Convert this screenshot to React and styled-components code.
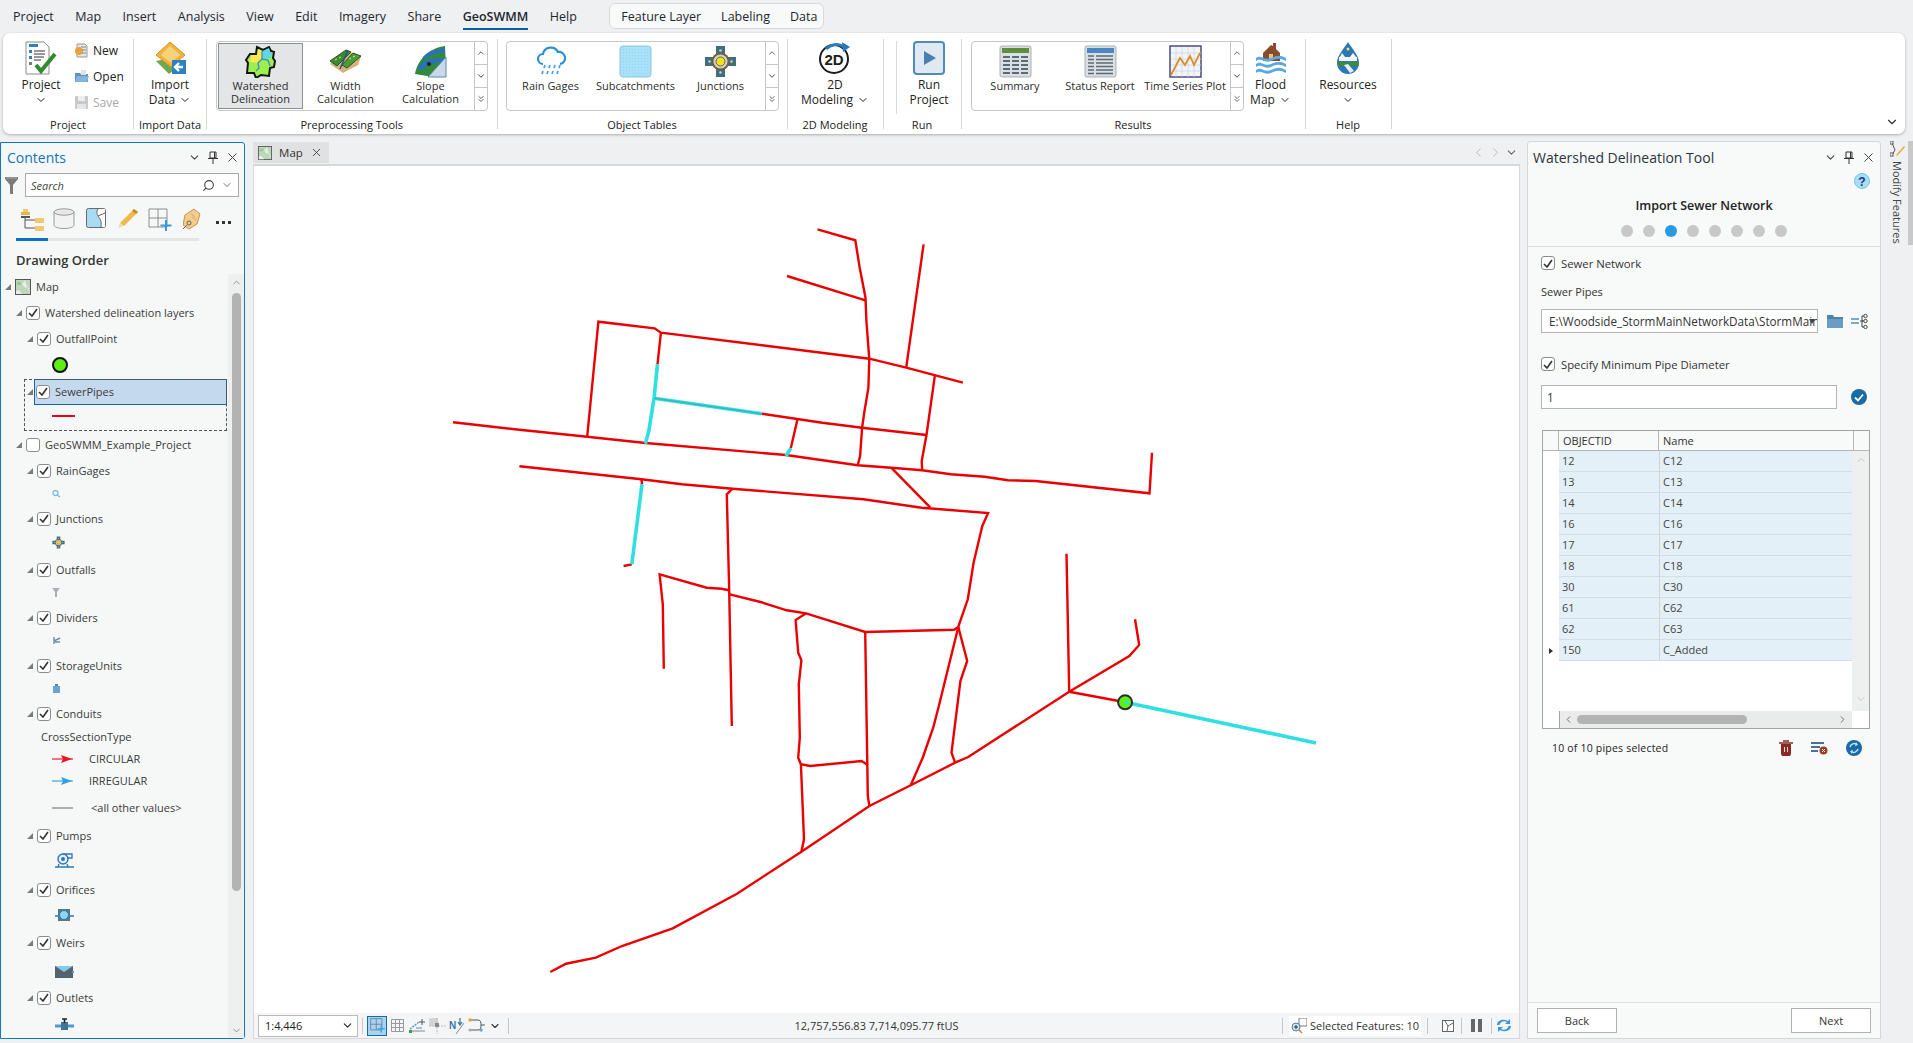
import React from 'react';
import styled, { createGlobalStyle } from 'styled-components';
import { ChevronDown, ChevronUp, ChevronLeft, ChevronRight, ChevronsDown, X, Search as SearchGlyph } from 'lucide-react';

const GlobalStyle = createGlobalStyle`
  html, body { margin: 0; padding: 0; background: #eef0f2; }
  body { font-family: "Open Sans", "Noto Sans", sans-serif; color: #2a2a2a; font-size: 11px; }
  * { box-sizing: border-box; }
`;

const Shell = styled.div`
  width: 1913px; height: 1043px; display: flex; flex-direction: column; overflow: hidden; background: #eef0f2;
`;

/* menu bar */
const MenuBar = styled.div`
  height: 33px; display: flex; align-items: flex-start; padding-left: 13px; gap: 21.5px;
`;
const MenuItem = styled.span`
  height: 27px; margin-top: 3px; line-height: 27px; font-size: 12.5px; color: #1e2730; white-space: nowrap;
  font-weight: ${p => (p.$active ? 600 : 400)};
  border-bottom: ${p => (p.$active ? '2px solid #0f5c9c' : 'none')};
`;
const ContextTabs = styled.div`
  margin-left: 11px; margin-top: 3px; height: 26px; width: 215px; display: flex; gap: 20px; padding-left: 11px;
  background: #f8f9f9; border: 1px solid #d9dcdf; border-radius: 6px; align-items: center;
  font-size: 12.5px; color: #1e2730;
`;

/* ribbon */
const Ribbon = styled.div`
  position: relative; margin-left: 3px; width: 1902px; height: 101px; display: flex; background: #fff;
  border-radius: 7px; box-shadow: 0 1px 3px rgba(0,0,0,.28);
`;
const Group = styled.div`
  width: ${p => p.$w}px; margin: 6px 0 5px; border-right: 1px solid #d4d6d8; display: flex; flex-direction: column;
`;
const GroupBody = styled.div`
  height: 78px; display: flex; padding-top: 2px; padding-left: ${p => p.$pad || 0}px;
  justify-content: ${p => (p.$center ? 'center' : 'flex-start')};
`;
const GroupLabel = styled.div`
  height: 12px; line-height: 16px; text-align: center; font-size: 11px; color: #222; white-space: nowrap;
`;
const LargeButton = styled.div`
  width: ${p => p.$w || 60}px; display: flex; flex-direction: column; align-items: center; flex: none;
  font-size: 12px; line-height: 15px; color: #222; text-align: center;
  svg.big { display: block; margin-bottom: 2px; }
`;
const LabelLine = styled.div`
  display: flex; align-items: center; justify-content: center; gap: 4px; height: 15px; white-space: nowrap;
`;
const SmallStack = styled.div`
  margin-top: -4px; margin-left: 3px; display: flex; flex-direction: column;
`;
const SmallButton = styled.div`
  height: 26px; display: flex; align-items: center; gap: 4px; font-size: 12px;
  color: ${p => (p.$off ? '#a8a8a8' : '#222')};
`;
const Gallery = styled.div`
  width: ${p => p.$w}px; height: 70px; display: flex; border: 1px solid #c4c6c8; border-radius: 4px; flex: none;
`;
const GalleryItems = styled.div`
  flex: 1; display: flex; padding: 1px;
`;
const GalleryItem = styled.div`
  width: 85px; height: 66px; display: flex; flex-direction: column; align-items: center; padding-top: 1px;
  font-size: 11px; line-height: 13px; color: #2c2c2c; text-align: center; white-space: nowrap;
  background: ${p => (p.$sel ? '#e3e5e7' : 'transparent')};
  border: ${p => (p.$sel ? '1px solid #8f8f8f' : '1px solid transparent')};
  svg { display: block; margin-bottom: 1px; flex: none; }
`;
const Spin = styled.div`
  width: 13px; border-left: 1px solid #c4c6c8; display: flex; flex-direction: column;
`;
const SpinCell = styled.div`
  flex: 1; display: flex; align-items: center; justify-content: center; color: #444;
  & + & { border-top: 1px solid #c4c6c8; }
`;
const Rule = styled.div`
  width: 1px; height: 73px; background: #d8dadc; flex: none;
`;
const CollapseRibbon = styled.div`
  position: absolute; right: 6px; bottom: 5px; color: #333; display: flex;
`;

/* panels */
const Body = styled.div`
  flex: 1; display: flex; margin-top: 7px; margin-bottom: 4px; min-height: 0;
`;
const ContentsPanel = styled.div`
  width: 245px; margin-top: 1px; display: flex; flex-direction: column; background: #f6f8f8;
  border: 1.5px solid #0e78c4; border-left-width: 1px; border-radius: 0 3px 3px 0; flex: none;
`;
const PanelHead = styled.div`
  height: ${p => p.$h}px; padding: 0 4px ${p => p.$pb || 0}px ${p => p.$pl}px; display: flex; align-items: center;
  justify-content: space-between; flex: none;
`;
const PanelTitle = styled.div`
  font-size: ${p => p.$size}px; color: ${p => p.$color}; white-space: nowrap;
`;
const PanelActions = styled.div`
  display: flex; align-items: center; gap: 7px; color: #444;
`;
const SearchRow = styled.div`
  display: flex; align-items: center; height: 24px; padding-left: 4px; gap: 7px; flex: none;
`;
const SearchBox = styled.div`
  width: 214px; height: 24px; background: #fff; border: 1px solid #a9a9a9; display: flex; align-items: center;
  padding: 0 5px; font-style: italic; font-size: 11px; color: #444; justify-content: space-between;
`;
const SearchTail = styled.div`
  display: flex; align-items: center; gap: 6px; color: #444;
`;
const ViewTabs = styled.div`
  margin: 9px 0 0 15px; width: 183px; height: 35px; display: flex; border-bottom: 3px solid #e3e5e6; position: relative; flex: none;
  &::after { content: ''; position: absolute; left: 0; bottom: -3px; width: 32px; height: 3px; background: #0f6fc0; }
`;
const ViewTab = styled.div`
  width: 32px; display: flex; justify-content: center; padding-top: 2px; flex: none;
`;
const SectionTitle = styled.div`
  margin: 8px 0 0 15px; height: 22px; line-height: 22px; font-size: 13px; font-weight: 600; color: #333; flex: none;
`;
const TreeWrap = styled.div`
  flex: 1; display: flex; min-height: 0; margin-top: 3px;
`;
const Tree = styled.div`
  flex: 1; padding-top: 2.7px; overflow: hidden;
`;
const TreeRow = styled.div`
  position: relative; height: ${p => p.$h}px; display: flex; align-items: flex-end;
  padding-left: ${p => p.$indent}px; flex: none;
`;
const RowInner = styled.div`
  height: 20px; display: flex; align-items: center; gap: ${p => p.$gap ?? 5}px; white-space: nowrap;
  font-size: 11px; color: #3a3a3a; flex: ${p => (p.$sel ? 1 : 'none')};
`;
const SelectedName = styled.div`
  flex: 1; height: 26px; display: flex; align-items: center; gap: 5px; padding-left: 1px; margin: 0 1px 0 -3px;
  background: #c5d9ee; border: 1px solid #0f68aa;
`;
const FocusRing = styled.div`
  position: absolute; left: 23px; right: 1px; top: 4px; height: 52px; border: 1px dashed #555; pointer-events: none;
`;
const Arrow = styled.span`
  width: 0; height: 0; border-style: solid; border-width: 0 0 6px 6px; border-color: transparent transparent #7a7a7a transparent;
  display: block; flex: none; margin-right: -1px;
`;
const Box = styled.span`
  width: 14px; height: 14px; display: flex; align-items: center; justify-content: center; background: #fff;
  border: 1px solid #8c8c8c; border-radius: 3px; flex: none;
`;
const VScroll = styled.div`
  width: 16px; background: #eef0f0; position: relative; flex: none;
`;
const ScrollThumb = styled.div`
  position: absolute; left: 4px; width: 9px; top: 19px; height: 598px; background: #b3b3b3; border-radius: 5px;
`;
const ScrollArrow = styled.div`
  position: absolute; left: 3px; color: #8a8a8a; display: flex;
  ${p => (p.$end ? 'bottom: 2px;' : 'top: 3px;')}
`;
const Legend = styled.span`
  margin-left: ${p => p.$ml || 0}px;
`;

/* map */
const Center = styled.div`
  width: 1267px; margin-left: 8px; margin-right: 7px; display: flex; flex-direction: column; flex: none;
`;
const TabStrip = styled.div`
  height: 22px; display: flex; justify-content: space-between; align-items: flex-start; margin-top: 1px; flex: none;
`;
const MapTab = styled.div`
  width: 76px; height: 21px; background: #dfe1e3; display: flex; align-items: center; padding: 0 6px 0 5px; gap: 5px;
  font-size: 11.5px; color: #333; justify-content: space-between;
`;
const TabNav = styled.div`
  display: flex; gap: 2px; color: #999; padding: 3px 2px 0 0; align-items: center;
`;
const MapFrame = styled.div`
  flex: 1; background: #fff; border-top: 2px solid #d6d8da; border-right: 1px solid #d6d8da; border-left: 1px solid #d6d8da; min-height: 0;
  svg { display: block; }
`;
const StatusBar = styled.div`
  height: 26px; background: #f3f5f6; display: flex; align-items: center; padding: 0 4px; border: 1px solid #d6d8da; border-top: none;
  font-size: 11px; color: #333; flex: none;
`;
const ScaleCombo = styled.div`
  width: 100px; height: 22px; background: #fff; border: 1px solid #b9b9b9; display: flex; align-items: center;
  justify-content: space-between; padding: 0 3px 0 6px; font-size: 11px; color: #222;
`;
const StatusSep = styled.div`
  width: 1px; height: 16px; background: #c6c8ca; margin: 0 ${p => p.$m ?? 0}px; flex: none;
`;
const ToolIcon = styled.div`
  width: ${p => p.$w || 18}px; height: 20px; display: flex; align-items: center; justify-content: center; flex: none;
  background: ${p => (p.$on ? '#a8d2ee' : 'transparent')};
  border: ${p => (p.$on ? '1px solid #0f6cb0' : 'none')};
`;
const Coords = styled.div`
  flex: 1; text-align: center; white-space: nowrap; font-size: 11px; padding-right: 36px;
`;
const SelectedCount = styled.div`
  display: flex; align-items: center; gap: 3px; white-space: nowrap; background: #fff; height: 20px; padding: 0 2px;
`;

/* right pane */
const ToolPanel = styled.div`
  width: 354px; display: flex; flex-direction: column; background: #f8f9f9; border: 1px solid #d4d6d8; border-radius: 3px 3px 0 0; flex: none;
`;
const HelpRow = styled.div`
  display: flex; justify-content: flex-end; padding-right: 10px; height: 18px; flex: none;
`;
const StepTitle = styled.div`
  margin-top: 5px; text-align: center; font-size: 12.5px; font-weight: 600; color: #222; height: 20px; line-height: 20px; flex: none;
`;
const Dots = styled.div`
  display: flex; justify-content: center; gap: 10px; margin-top: 9px; flex: none;
`;
const Dot = styled.span`
  width: 12px; height: 12px; border-radius: 50%; background: ${p => (p.$on ? '#2b9ae5' : '#c8c8c8')};
`;
const ToolBody = styled.div`
  flex: 1; margin-top: 9px; border-top: 1px solid #dcdee0; padding: 0 10px 0 13px; display: flex; flex-direction: column; min-height: 0;
`;
const CheckRow = styled.div`
  display: flex; align-items: center; gap: 6px; height: 20px; margin-top: ${p => p.$mt}px; font-size: 11.3px; color: #333;
`;
const FieldLabel = styled.div`
  margin-top: 9px; height: 20px; line-height: 20px; font-size: 11px; color: #333;
`;
const FieldRow = styled.div`
  display: flex; align-items: center; margin-top: ${p => p.$mt}px; height: 24px;
`;
const Combo = styled.div`
  width: ${p => p.$w}px; height: 24px; background: #fff; border: 1px solid #b5b5b5; display: flex; align-items: center;
  padding-left: ${p => p.$pl}px; font-size: 11.7px; color: #333; white-space: nowrap; overflow: hidden; position: relative; flex: none;
`;
const ComboMark = styled.span`
  position: absolute; right: 2px; top: 9px; width: 0; height: 0; border-style: solid; border-width: 5px 3.5px 0; border-color: #444 transparent transparent;
`;
const FieldTool = styled.div`
  margin-left: ${p => p.$ml}px; display: flex; flex: none;
`;
const Table = styled.div`
  margin: 21px 0 0 1px; width: 328px; height: 299px; border: 1px solid #a3a3a3; display: flex; flex-direction: column; background: #fff; flex: none;
`;
const HeadRow = styled.div`
  height: 20px; display: grid; grid-template-columns: 16px 100px 195px 1fr; border-bottom: 1px solid #b5b5b5; background: #f8f9f9; flex: none;
`;
const HeadCell = styled.div`
  border-right: 1px solid #b5b5b5; padding-left: 4px; font-size: 11px; line-height: 19px; color: #333;
  &:last-child { border-right: none; }
`;
const TableBody = styled.div`
  flex: 1; display: flex; min-height: 0;
`;
const RowsCol = styled.div`
  flex: 1;
`;
const DataRow = styled.div`
  height: 21px; display: grid; grid-template-columns: 16px 100px 1fr;
`;
const Gutter = styled.div`
  display: flex; align-items: center; justify-content: center; background: #fff;
`;
const Cell = styled.div`
  background: #e4f0f8; border-bottom: 1px solid #d3dde4; padding-left: 3px; line-height: 20px; font-size: 11px; color: #444;
  & + & { border-left: 1px solid #d0d3d5; }
`;
const RowMark = styled.span`
  width: 0; height: 0; border-style: solid; border-width: 3.5px 0 3.5px 4px; border-color: transparent transparent transparent #333;
`;
const TableVScroll = styled.div`
  width: 17px; background: #eeefef; display: flex; flex-direction: column; justify-content: space-between; align-items: center; padding: 3px 0 6px; color: #c4c4c4;
`;
const TableHScroll = styled.div`
  height: 17px; display: grid; grid-template-columns: 16px 1fr 17px; flex: none;
`;
const HTrack = styled.div`
  background: #eaebeb; display: flex; align-items: center; justify-content: space-between; color: #666; padding: 0 4px 0 3px; border-left: 1px solid #a3a3a3; position: relative;
`;
const HThumb = styled.div`
  position: absolute; left: 17px; width: 170px; height: 9px; top: 4px; background: #b3b3b3; border-radius: 5px;
`;
const CountRow = styled.div`
  display: flex; align-items: center; height: 24px; margin-top: 7px; padding-left: 11px; font-size: 10.5px; letter-spacing: .2px; color: #222;
`;
const CountTools = styled.div`
  margin-left: auto; display: flex; gap: 18px; padding-right: 8px; align-items: center;
`;
const ToolFoot = styled.div`
  height: 36px; border-top: 1px solid #dcdee0; padding: 5px 9px 0; display: flex; justify-content: space-between; flex: none;
`;
const FootButton = styled.div`
  width: 80px; height: 25px; background: #fff; border: 1px solid #b0b0b0; display: flex; align-items: center; justify-content: center; font-size: 11px; color: #333;
`;
const Strip = styled.div`
  flex: 1; display: flex; height: 104px; justify-content: space-between; padding-left: 9px;
`;
const StripTab = styled.div`
  display: flex; flex-direction: column; align-items: center; gap: 4px;
`;
const VerticalText = styled.div`
  writing-mode: vertical-rl; font-size: 11px; color: #444; white-space: nowrap;
`;
const StripBar = styled.div`
  width: 5px; background: #c9c9c9;
`;

/* drawings */
const ProjectIcon = () => (
  <svg className="big" width="32" height="34" viewBox="0 0 32 34">
    <path d="M1 1h18l5 5v27H1z" fill="#fff" stroke="#8b8b8b" />
    <rect x="4" y="3" width="9" height="3" fill="#2f7fc1" />
    <rect x="4" y="9" width="3" height="3" fill="#2f7fc1" /><rect x="4" y="15" width="3" height="3" fill="#2f7fc1" /><rect x="4" y="21" width="3" height="3" fill="#7a7a7a" />
    <path d="M9 10h11M9 13h11M9 16h10M9 19h7" stroke="#777" strokeWidth="1.4" />
    <path d="M11 24l5 6L30 13" fill="none" stroke="#2e8b2e" strokeWidth="4" />
  </svg>
);
const NewIcon = () => (
  <svg width="15" height="15" viewBox="0 0 15 15">
    <path d="M3 1h8l2 2v11H3z" fill="#e4e6e8" stroke="#9a9a9a" />
    <circle cx="5" cy="8" r="4" fill="#e8a33a" /><path d="M7 4h5M8 7h4M8 10h4" stroke="#888" />
  </svg>
);
const OpenIcon = () => (
  <svg width="15" height="15" viewBox="0 0 15 15">
    <path d="M1 4h5l1 1h7v8H1z" fill="#5a93c4" /><path d="M3 7h12l-2 6H1z" fill="#86b3d9" />
    <rect x="7" y="1" width="5" height="5" fill="#dfe3e6" />
  </svg>
);
const SaveIcon = () => (
  <svg width="15" height="15" viewBox="0 0 15 15">
    <rect x="1" y="1" width="13" height="13" rx="1" fill="#c7c9cb" /><rect x="4" y="1" width="7" height="5" fill="#eceeef" /><rect x="3" y="9" width="9" height="5" fill="#e3e5e6" />
  </svg>
);
const ImportIcon = () => (
  <svg className="big" width="33" height="34" viewBox="0 0 33 34">
    <path d="M2 20l13 13 8-6V16z" fill="#6ea84f" />
    <path d="M16 1l15 13-14 12L2 14z" fill="#f0b43c" stroke="#d98e1f" />
    <path d="M16 5l10 9-9 8-10-8z" fill="#f6d27a" />
    <rect x="18" y="19" width="14" height="14" fill="#2f7fc1" />
    <path d="M29 26h-8M25 22l-4 4 4 4" fill="none" stroke="#fff" strokeWidth="2.4" />
  </svg>
);
const WatershedIcon = () => (
  <svg width="33" height="33" viewBox="0 0 33 33">
    <path d="M6 9h6l1-7 6 3 6-3 2 4 3 1-1 6 2 3-1 6-4 1-1 8-8-1-5 3-2-5-7 0 1-10-2-3z" fill="#9df04c" stroke="#151515" strokeWidth="2" />
    <path d="M7 10h6l1-6 4 2v8l-5 4-7-1z" fill="#ffe94a" />
    <path d="M19 6l6-3 1 4 2 1-1 5-8 1z" fill="#5fd6f0" />
    <path d="M18 6v8l-4 4 1 5-3 3M18 14l6 1 2 6" fill="none" stroke="#3f8fd0" strokeWidth="1.4" />
  </svg>
);
const WidthIcon = () => (
  <svg width="33" height="33" viewBox="0 0 33 33">
    <path d="M1 19l18-13 13 6-3 8-15 8z" fill="#d6b27a" />
    <path d="M1 16L17 5l5 2-14 14z" fill="#3f8a2e" stroke="#24591a" />
    <path d="M13 20L24 8l8 3-14 12z" fill="#4c9a38" stroke="#24591a" />
    <path d="M19 5l-8 19" stroke="#1d4fa0" strokeWidth="1.4" />
    <path d="M6 15l2-1M10 13l2-1M20 14l2-1M24 12l2-1" stroke="#cfe8b0" />
  </svg>
);
const SlopeIcon = () => (
  <svg width="33" height="33" viewBox="0 0 33 33">
    <path d="M1 29C3 16 14 3 31 1l1 22-13 9z" fill="#2f8b3a" />
    <path d="M9 12C15 6 23 3 31 4l0 4C22 7 15 11 9 15z" fill="#2a6fc0" />
    <path d="M4 22c7-8 15-10 27-8v4C21 16 13 20 6 26z" fill="#2a6fc0" />
    <path d="M14 32l18-20v20z" fill="#c9d9ea" stroke="#5f86b0" />
    <circle cx="15" cy="19" r="2" fill="#1d1d1d" />
  </svg>
);
const RainIcon = () => (
  <svg width="33" height="33" viewBox="0 0 33 33">
    <path d="M9 19a5 5 0 0 1 0-10 8 8 0 0 1 15-2 6 6 0 0 1 2 12" fill="#fff" stroke="#2f8fd4" strokeWidth="2.2" />
    <path d="M11 20l-1 3M16 20l-1 3M21 20l-1 3M26 20l-1 3M9 26l-1 3M14 26l-1 3M19 26l-1 3M24 26l-1 3" stroke="#3fa0dd" strokeWidth="1.7" />
  </svg>
);
const SubcatchIcon = () => (
  <svg width="33" height="33" viewBox="0 0 33 33">
    <defs><pattern id="subdots" width="3" height="3" patternUnits="userSpaceOnUse"><rect width="3" height="3" fill="#a9e2f8" /><circle cx="1.5" cy="1.5" r=".6" fill="#8fd2f0" /></pattern></defs>
    <rect x="1" y="1" width="31" height="31" rx="3" fill="url(#subdots)" stroke="#8ec7e6" />
  </svg>
);
const JunctionIcon = ({ size = 33 }) => (
  <svg width={size} height={size} viewBox="0 0 33 33">
    <path d="M12 1h9v8l3 3h8v9h-8l-3 3v8h-9v-8l-3-3H1v-9h8l3-3z" fill="#3f6f78" />
    <circle cx="16.5" cy="16.5" r="9" fill="#7c5a3a" /><circle cx="16.5" cy="16.5" r="7" fill="#c9d6d8" /><circle cx="16.5" cy="16.5" r="4.5" fill="#f4e01c" stroke="#222" strokeWidth=".6" />
    <circle cx="16.5" cy="5.5" r="1.3" fill="#bcd" /><circle cx="16.5" cy="27.5" r="1.3" fill="#bcd" /><circle cx="5.5" cy="16.5" r="1.3" fill="#bcd" /><circle cx="27.5" cy="16.5" r="1.3" fill="#bcd" />
  </svg>
);
const ModelIcon = () => (
  <svg className="big" width="34" height="34" viewBox="0 0 34 34">
    <circle cx="16" cy="18" r="14" fill="#fff" stroke="#1c1c1c" strokeWidth="2" />
    <path d="M8 8A14 14 0 0 1 26 6" fill="none" stroke="#2a7ab8" strokeWidth="3" />
    <path d="M24 1l8 5-7 5z" fill="#2a7ab8" />
    <text x="16" y="24" textAnchor="middle" fontFamily="Liberation Sans, sans-serif" fontSize="15" fontWeight="700" fill="#1c1c1c">2D</text>
  </svg>
);
const RunIcon = () => (
  <svg className="big" width="32" height="34" viewBox="0 0 32 34">
    <rect x="1" y="1" width="30" height="32" rx="3" fill="#dfe9f2" stroke="#4f8ab8" strokeWidth="2" />
    <path d="M11 10l12 7-12 7z" fill="#4a7fb0" />
  </svg>
);
const SummaryIcon = () => (
  <svg width="33" height="33" viewBox="0 0 33 33">
    <rect x="1" y="1" width="31" height="31" rx="2" fill="#d9dfe3" stroke="#a7b1b8" />
    <rect x="3" y="3" width="27" height="5" fill="#5f8f3e" />
    <path d="M4 12h7M13 12h7M22 12h7M4 16h7M13 16h7M22 16h7M4 20h7M13 20h7M22 20h7M4 24h7M13 24h7M22 24h7M4 28h7M13 28h7M22 28h7" stroke="#5c6a74" strokeWidth="2" />
  </svg>
);
const StatusIcon = () => (
  <svg width="33" height="33" viewBox="0 0 33 33">
    <rect x="1" y="1" width="31" height="31" rx="2" fill="#d9dfe3" stroke="#a7b1b8" />
    <rect x="3" y="3" width="27" height="5" fill="#4d86c4" />
    <path d="M4 11h6M12 11h17M4 14.5h6M12 14.5h17M4 18h6M12 18h17M4 21.5h6M12 21.5h17M4 25h6M12 25h17M4 28.5h6M12 28.5h17" stroke="#5c6a74" strokeWidth="1.6" />
  </svg>
);
const SeriesIcon = () => (
  <svg width="33" height="33" viewBox="0 0 33 33">
    <rect x="1" y="1" width="31" height="31" fill="#f2f5f8" stroke="#3e3f7a" strokeWidth="1.4" />
    <path d="M7 2v30M13 2v30M19 2v30M25 2v30M2 8h30M2 14h30M2 20h30M2 26h30" stroke="#cdd6de" strokeWidth=".8" />
    <path d="M2 30L11 13l5 7 5-9 4 9 6-12" fill="none" stroke="#d98e2b" strokeWidth="1.8" />
  </svg>
);
const FloodIcon = () => (
  <svg className="big" width="32" height="34" viewBox="0 0 32 34">
    <path d="M8 12l8-8 2 1V2h3v6l4 4v8H8z" fill="#8a4a30" />
    <rect x="14" y="13" width="4" height="5" fill="#f0c26a" />
    <path d="M1 17c5-4 8 3 15 0s9-3 15 0v3c-6-3-9-3-15 0s-10-4-15 0z" fill="#5aa8e0" />
    <path d="M1 23c5-4 8 3 15 0s9-3 15 0v3c-6-3-9-3-15 0s-10-4-15 0z" fill="#5aa8e0" />
    <path d="M1 29c5-4 8 3 15 0s9-3 15 0v3c-6-3-9-3-15 0s-10-4-15 0z" fill="#5aa8e0" />
  </svg>
);
const DropIcon = () => (
  <svg className="big" width="26" height="34" viewBox="0 0 26 34">
    <path d="M13 1C9 8 2 14 2 22a11 11 0 0 0 22 0C24 14 17 8 13 1z" fill="#2a78b8" />
    <path d="M4 16h18v4H4z" fill="#f2f5f2" /><path d="M7 12l3 4H5zM18 12l3 4h-6z" fill="#fff" />
    <path d="M2.5 22c5-3 8 1 11 0s7-3 10 0v3H3z" fill="#3f8a3a" />
    <path d="M9 24l6 8 4-2-6-7z" fill="#e8eef2" /><circle cx="13" cy="8" r="1.5" fill="#f5e05a" />
  </svg>
);

const Tick = () => (
  <svg width="10" height="9" viewBox="0 0 10 9"><path d="M1 5l3 3 5-7" fill="none" stroke="#333" strokeWidth="1.6" /></svg>
);
const PinIcon = () => (
  <svg width="10" height="13" viewBox="0 0 10 13"><path d="M2 1h6v6H2zM0 7.5h10M5 8v5M6.5 1v6" fill="none" stroke="#333" /></svg>
);
const FunnelIcon = () => (
  <svg width="13" height="17" viewBox="0 0 13 17"><path d="M0 0h13v2L8 8v9H5V8L0 2z" fill="#7b7b7b" /><path d="M1 1h11" stroke="#aaa" /></svg>
);
const OrderTab = () => (
  <svg width="23" height="24" viewBox="0 0 23 24">
    <rect x="0" y="4" width="9" height="3" fill="#e9b44c" /><rect x="2" y="1" width="5" height="3" fill="#f1c86e" />
    <rect x="14" y="10" width="9" height="5" fill="#f1c86e" /><rect x="14" y="18" width="9" height="5" fill="#f1c86e" />
    <path d="M4 8v12h10M4 12h10" fill="none" stroke="#555" /><rect x="0" y="8" width="9" height="2" fill="#555" />
  </svg>
);
const CylinderTab = () => (
  <svg width="22" height="21" viewBox="0 0 22 21">
    <path d="M1 4v13c0 2 4 3.5 10 3.5s10-1.5 10-3.5V4" fill="#f2f2f2" stroke="#9a9a9a" />
    <ellipse cx="11" cy="4" rx="10" ry="3.2" fill="#e8e8e8" stroke="#9a9a9a" />
  </svg>
);
const MapTabIcon = ({ size = 20 }) => (
  <svg width={size} height={size} viewBox="0 0 20 20">
    <rect x=".5" y=".5" width="19" height="19" rx="2" fill="#a8dcf2" stroke="#6a6a6a" />
    <path d="M12 1c-2 3-1 5 0 7s4 3 3 11h4V1z" fill="#fff" /><path d="M12 1c-2 3-1 5 0 7s4 3 3 11" fill="none" stroke="#666" /><path d="M12 8l7-3" stroke="#666" />
  </svg>
);
const PencilTab = () => (
  <svg width="21" height="21" viewBox="0 0 21 21">
    <path d="M16 1l4 3L6 18l-4-3z" fill="#f0b94a" /><path d="M2 15l-2 5 5-2z" fill="#e8d8b0" /><path d="M16 1l4 3-2 2-4-3z" fill="#c98a2a" />
  </svg>
);
const GridPlus = ({ s = 24, c = '#8c8c8c' }) => (
  <svg width={s} height={s} viewBox="0 0 24 24">
    <path d="M1 1h18v18H1zM1 10h18M10 1v18" fill="none" stroke={c} />
    <path d="M18 12v11M12.5 17.5h11" stroke="#3a9ad9" strokeWidth="2" />
  </svg>
);
const TagTab = () => (
  <svg width="18" height="22" viewBox="0 0 18 22">
    <path d="M11 1l6 5-3 10-8 5-6-4 2-10z" fill="#f3cb8c" stroke="#c9934a" />
    <circle cx="6" cy="15" r="2" fill="none" stroke="#666" /><path d="M0 21l4-4" stroke="#666" />
    <path d="M9 9l4 3M8 6l4 3" stroke="#d9a860" />
  </svg>
);
const DotsTab = () => (
  <svg width="16" height="3" viewBox="0 0 16 3" style={{ marginTop: 13 }}><path d="M0 0h3v3H0zM6 0h3v3H6zM12 0h3v3h-3z" fill="#333" /></svg>
);
const MapGlyph = ({ s = 16 }) => (
  <svg width={s} height={s} viewBox="0 0 16 16">
    <rect x=".5" y=".5" width="15" height="15" fill="#bcd8b8" stroke="#555" />
    <path d="M10 1l-3 4 2 3 5 1 1 6H7L4 11l-3 1V15h14" fill="#e8ece6" /><path d="M2 3h4v3H2z" fill="#9dc49a" />
  </svg>
);
const Line = ({ c, arrow }) => (
  <svg width="22" height="8" viewBox="0 0 22 8" style={{ display: 'block' }}>
    <path d="M0 4h21" stroke={c} strokeWidth="1.6" opacity={arrow ? 0.7 : 1} />
    {arrow && <path d="M9 0l11 4-11 4 2-4z" fill={c} />}
  </svg>
);
const RainSym = () => (<svg width="9" height="8" viewBox="0 0 9 8"><circle cx="3.5" cy="3" r="2.5" fill="none" stroke="#74bde8" strokeWidth="1.3" /><path d="M5 5l3 2" stroke="#74bde8" strokeWidth="1.3" /></svg>);
const OutfallSym = () => (<svg width="8" height="9" viewBox="0 0 8 9"><path d="M0 0h8L5 4v5H3V4z" fill="#aab2b8" /></svg>);
const DividerSym = () => (<svg width="9" height="9" viewBox="0 0 9 9"><path d="M2 1v7M2 5l6-3M3 6l5 0" stroke="#6d8ea6" strokeWidth="1.4" fill="none" /></svg>);
const StorageSym = () => (<svg width="7" height="9" viewBox="0 0 7 9"><rect x="0" y="2" width="7" height="7" fill="#6aa5cf" /><rect x="2" y="0" width="3" height="2" fill="#4f86ad" /></svg>);
const PumpSym = () => (
  <svg width="19" height="16" viewBox="0 0 19 16">
    <circle cx="8" cy="6" r="5" fill="#e8f2fa" stroke="#2a78b8" strokeWidth="1.4" /><circle cx="8" cy="6" r="2" fill="#2a78b8" />
    <path d="M8 1h9v4h-5M0 14h19M4 11l-1 3M12 11l1 3" fill="none" stroke="#2a78b8" strokeWidth="1.3" />
  </svg>
);
const OrificeSym = () => (
  <svg width="19" height="13" viewBox="0 0 19 13">
    <path d="M0 7h19" stroke="#4f9ad0" strokeWidth="2" /><rect x="3" y="0" width="12" height="12" fill="#5f7482" />
    <circle cx="9" cy="6" r="4.5" fill="#8fd6f5" stroke="#2a78b8" />
  </svg>
);
const WeirSym = () => (
  <svg width="19" height="12" viewBox="0 0 19 12">
    <rect width="18" height="12" fill="#56636e" /><path d="M0 0h18L9 6z" fill="#84c8ef" /><path d="M17 6h2" stroke="#4f9ad0" strokeWidth="2" />
  </svg>
);
const OutletSym = () => (
  <svg width="19" height="12" viewBox="0 0 19 12">
    <path d="M0 8h19" stroke="#4f9ad0" strokeWidth="3" /><rect x="6" y="4" width="7" height="8" fill="#3f7499" /><path d="M7 1h5M9.5 1v4" stroke="#222" strokeWidth="1.6" />
  </svg>
);
const FolderIcon = () => (
  <svg width="16" height="14" viewBox="0 0 16 14"><path d="M0 1h6l1 2h9v11H0z" fill="#4d82ad" /><path d="M0 5h16v9H0z" fill="#6b9cc4" /></svg>
);
const TreeIcon = () => (
  <svg width="17" height="15" viewBox="0 0 17 15">
    <path d="M0 5h8M0 9h8" stroke="#7fa8c9" strokeWidth="2" /><path d="M9 7h3M11 2v11M11 2h2M11 7h2M11 13h2" fill="none" stroke="#444" />
    <circle cx="14.5" cy="2" r="1.7" fill="#fff" stroke="#444" /><circle cx="14.5" cy="7" r="1.7" fill="#fff" stroke="#444" /><circle cx="14.5" cy="13" r="1.7" fill="#fff" stroke="#444" />
  </svg>
);
const ApplyIcon = () => (
  <svg width="16" height="16" viewBox="0 0 16 16"><circle cx="8" cy="8" r="8" fill="#1a6aa8" /><path d="M4 8.5l3 3 5-6" fill="none" stroke="#fff" strokeWidth="1.8" /></svg>
);
const HelpIcon = () => (
  <svg width="16" height="16" viewBox="0 0 16 16">
    <circle cx="8" cy="8" r="7.5" fill="#a8def5" stroke="#7cc4e6" />
    <text x="8" y="12.5" textAnchor="middle" fontSize="12" fontWeight="700" fontFamily="Liberation Sans, sans-serif" fill="#123a78">?</text>
  </svg>
);
const TrashIcon = () => (
  <svg width="14" height="16" viewBox="0 0 14 16"><path d="M0 3h14M4 1h6" stroke="#8a2a22" strokeWidth="1.5" /><path d="M2 4h10v10l-1 2H3l-1-2z" fill="#8a2a22" /><path d="M5.5 7v5M8.5 7v5" stroke="#f0d8d0" /></svg>
);
const ClearIcon = () => (
  <svg width="17" height="13" viewBox="0 0 17 13"><path d="M0 1h13M0 5h9M0 9h7" stroke="#4a6f96" strokeWidth="2" /><circle cx="12.5" cy="8.5" r="4" fill="#a23a28" /><path d="M11 7l3 3M14 7l-3 3" stroke="#fff" /></svg>
);
const RefreshIcon = () => (
  <svg width="16" height="16" viewBox="0 0 16 16"><circle cx="8" cy="8" r="8" fill="#1a6aa8" /><path d="M4 7a4.5 4.5 0 0 1 7-2.5M12 9a4.5 4.5 0 0 1-7 2.5" fill="none" stroke="#bfe2f7" strokeWidth="1.5" /><path d="M10 2l2 3-3 1zM6 14l-2-3 3-1z" fill="#bfe2f7" /></svg>
);
const ModifyIcon = () => (
  <svg width="15" height="16" viewBox="0 0 15 16"><path d="M2 2l3 7-3 5" fill="none" stroke="#555" /><rect x="0" y="0" width="3" height="3" fill="#fff" stroke="#555" /><rect x="0" y="12" width="3" height="3" fill="#fff" stroke="#555" /><path d="M14 5l-7 8-1 2 2-1 7-8z" fill="#e8a33a" /></svg>
);
const SnapGrid = () => (
  <svg width="13" height="13" viewBox="0 0 13 13"><path d="M.5.5h12v12H.5zM4.5.5v12M8.5.5v12M.5 4.5h12M.5 8.5h12" fill="none" stroke="#999" /></svg>
);
const GuideIcon = () => (
  <svg width="17" height="14" viewBox="0 0 17 14"><path d="M1 10L10 3" stroke="#6a9cc8" strokeDasharray="2 1" strokeWidth="1.5" /><path d="M13 0v6M10 3h6" stroke="#555" /><path d="M1 12h15" stroke="#888" /><rect x="0" y="11" width="3" height="3" fill="#3aa03a" /><rect x="7" y="8" width="6" height="2" fill="#9ec1de" /></svg>
);
const CenterIcon = () => (
  <svg width="17" height="16" viewBox="0 0 17 16"><rect x="0" y="0" width="9" height="8" fill="#d4d4d4" /><path d="M8 0v16M0 8h17" stroke="#bbb" strokeDasharray="2 1" /><rect x="6" y="5" width="4" height="4" fill="#888" /></svg>
);
const NorthIcon = () => (
  <svg width="16" height="16" viewBox="0 0 16 16"><text x="0" y="11" fontSize="10" fontWeight="700" fontFamily="Liberation Sans, sans-serif" fill="#3a7ab0">N</text><path d="M11 0v6M9 4l2 3 2-3" fill="none" stroke="#3a7ab0" strokeWidth="1.3" /><path d="M15 5L7 16" stroke="#888" /></svg>
);
const TopoIcon = () => (
  <svg width="17" height="15" viewBox="0 0 17 15"><path d="M2 2h8c3 0 3 3 3 5s0 5-3 5H3" fill="none" stroke="#555" /><circle cx="2" cy="2" r="1.7" fill="#e8a33a" /><circle cx="13" cy="12" r="1.7" fill="#6aa5cf" /><circle cx="2" cy="12" r="1.5" fill="#aaa" /><path d="M13 7h4" stroke="#555" /></svg>
);
const ZoomSelected = () => (
  <svg width="16" height="16" viewBox="0 0 16 16"><rect x="8" y="0" width="8" height="8" fill="#fff" stroke="#777" /><circle cx="5" cy="9" r="4" fill="#cfe6f5" stroke="#4a7fb0" /><path d="M3 9h4M5 7v4" stroke="#333" /><path d="M8 12l3 3" stroke="#c98a2a" strokeWidth="1.6" /></svg>
);
const ExtentIcon = () => (
  <svg width="12" height="12" viewBox="0 0 12 12"><rect x=".5" y=".5" width="11" height="11" fill="#fff" stroke="#666" /><path d="M3 1l3 5-1 5M6 6l5-3" fill="none" stroke="#666" /></svg>
);
const PauseIcon = () => (
  <svg width="11" height="13" viewBox="0 0 11 13"><path d="M0 0h4v13H0zM7 0h4v13H7z" fill="#666" /></svg>
);
const SyncIcon = () => (
  <svg width="16" height="15" viewBox="0 0 16 15"><path d="M1 7c0-4 5-7 11-4l2-2v5H9l2-2C8 2 4 4 3.5 7zM15 8c0 4-5 7-11 4l-2 2V9h5l-2 2c3 2 7 0 7.5-3z" fill="#3f96d6" /></svg>
);

/* data */
const redLines = [
  [[817.5,228.3],[855.3,239.3],[859.7,266.7],[865.5,296.7],[866.4,320],[869.3,358.3],[868.4,386.7],[864.5,410],[862.1,426.7],[860.1,455],[857.7,464.3]],
  [[787,275],[865.5,299.3]],
  [[923.6,243.3],[906.2,366.7]],
  [[587.2,435.7],[598.4,320.7],[654.6,327.3],[660.9,331.7],[869.3,357.7],[906.2,366.7],[962.9,381.7]],
  [[660.9,331.7],[657.5,363.3]],
  [[761.7,412.7],[822.3,421.7],[862.1,426.7],[926.5,434]],
  [[934.8,375],[926.5,434],[921.7,460],[922.2,469.3]],
  [[797.6,417.7],[790.8,447.3]],
  [[453,421.3],[521.8,429],[587.2,435.7],[645.4,442],[786,454],[857.7,464.3],[891.2,466.7],[922.2,469.3],[950.8,473.3],[984.7,475.7],[1008,479.3],[1035.6,480],[1149.5,492.3],[1152,451.7]],
  [[519.4,465.3],[641.5,478.3],[681.8,483.3],[732.6,487.7],[863.5,498.3],[921.7,506.7],[988.1,512],[982.3,525],[973.6,561.7],[967.8,598.3],[958,626.7]],
  [[891.2,466.7],[930.4,506.7]],
  [[641.5,478.3],[642,483.3]],
  [[631.8,563.3],[623.6,565]],
  [[732.6,487.7],[726.8,493.3],[729.2,590],[731.8,725]],
  [[663.8,667.7],[662.8,603.3],[659.6,573.3],[706.7,586.7],[721.4,587.7],[729.2,589.3]],
  [[729.7,593.3],[760.6,601],[786.7,609.3],[806.1,612.3],[865.2,631],[954.1,628.7],[958.3,626]],
  [[806.1,612.3],[795.6,619],[798.2,651.7],[801.4,659.3],[798.8,683.3],[799.8,736.7],[798.2,756.7],[800.9,763.3],[804,838.3],[801.4,850.7]],
  [[800.9,763.3],[810.3,765],[861.5,760],[867.8,764]],
  [[865.2,631],[867.8,795],[869.4,805]],
  [[958.3,626],[938.4,706.7],[933.2,726.7],[922.7,756.7],[910.7,784.3]],
  [[958.3,626],[967.2,660],[960.4,680],[951.5,751.7],[955.1,761.7]],
  [[550.3,971],[566,962.7],[595.8,956.7],[622,945],[672.7,927.3],[737,892.7],[801.4,850.7],[869.4,805],[910.7,784.3],[955.1,761.7],[968.2,756],[1069.2,690.7],[1129.3,655],[1139.2,644],[1135,618.3]],
  [[1066.5,552.7],[1069.2,690.7]],
  [[1069.2,690.7],[1118.9,700]],
];
const cyanLines = [
  [[657.5,363.3],[654.1,396.7],[648.8,430],[645.4,442.7]],
  [[654.1,397.3],[761.7,412.7]],
  [[790.8,447.3],[786,455]],
  [[642,483.3],[631.8,563.3]],
  [[1125.1,701.3],[1316,742]],
];
const toPoints = line => line.map(p => p.join(',')).join(' ');

const layerRows = [
  { kind: 'map', h: 20, label: 'Map' },
  { kind: 'layer', level: 1, h: 26, label: 'Watershed delineation layers' },
  { kind: 'layer', level: 2, h: 26, label: 'OutfallPoint' },
  { kind: 'sym', h: 26, icon: <svg width="16" height="16" viewBox="0 0 16 16"><circle cx="8" cy="8" r="7" fill="#5cf014" stroke="#111" strokeWidth="2" /></svg>, pad: 51 },
  { kind: 'layer', level: 2, h: 27, label: 'SewerPipes', sel: true },
  { kind: 'sym', h: 25, icon: <svg width="23" height="3" viewBox="0 0 23 3" style={{ display: 'block' }}><rect width="23" height="2" fill="#e8001c" /></svg>, pad: 51 },
  { kind: 'layer', level: 1, h: 28, label: 'GeoSWMM_Example_Project', off: true },
  { kind: 'layer', level: 2, h: 26, label: 'RainGages' },
  { kind: 'sym', h: 23, icon: <RainSym />, pad: 51 },
  { kind: 'layer', level: 2, h: 25, label: 'Junctions' },
  { kind: 'sym', h: 24, icon: <JunctionIcon size={13} />, pad: 51 },
  { kind: 'layer', level: 2, h: 27, label: 'Outfalls' },
  { kind: 'sym', h: 23, icon: <OutfallSym />, pad: 51 },
  { kind: 'layer', level: 2, h: 25, label: 'Dividers' },
  { kind: 'sym', h: 23, icon: <DividerSym />, pad: 51 },
  { kind: 'layer', level: 2, h: 25, label: 'StorageUnits' },
  { kind: 'sym', h: 23, icon: <StorageSym />, pad: 52 },
  { kind: 'layer', level: 2, h: 25, label: 'Conduits' },
  { kind: 'text', h: 23, label: 'CrossSectionType', pad: 40 },
  { kind: 'sym', h: 22, icon: <Line c="#f01020" arrow />, label: 'CIRCULAR', ml: 10, pad: 51 },
  { kind: 'sym', h: 22, icon: <Line c="#2f9fe5" arrow />, label: 'IRREGULAR', ml: 10, pad: 51 },
  { kind: 'sym', h: 27, icon: <Line c="#9a9a9a" />, label: '<all other values>', ml: 12, pad: 51 },
  { kind: 'layer', level: 2, h: 28, label: 'Pumps' },
  { kind: 'sym', h: 25, icon: <PumpSym />, pad: 54 },
  { kind: 'layer', level: 2, h: 29, label: 'Orifices' },
  { kind: 'sym', h: 26, icon: <OrificeSym />, pad: 54 },
  { kind: 'layer', level: 2, h: 27, label: 'Weirs' },
  { kind: 'sym', h: 29, icon: <WeirSym />, pad: 54 },
  { kind: 'layer', level: 2, h: 26, label: 'Outlets' },
  { kind: 'sym', h: 26, icon: <OutletSym />, pad: 54 },
];
const levelPad = { 0: 4, 1: 15, 2: 26 };

const pipes = [
  ['12', 'C12'], ['13', 'C13'], ['14', 'C14'], ['16', 'C16'], ['17', 'C17'],
  ['18', 'C18'], ['30', 'C30'], ['61', 'C62'], ['62', 'C63'], ['150', 'C_Added'],
];

const Chev = ({ s = 12, w = 2 }) => <ChevronDown size={s} strokeWidth={w} />;

function SpinColumn() {
  return (
    <Spin>
      <SpinCell><ChevronUp size={10} strokeWidth={2} /></SpinCell>
      <SpinCell><ChevronDown size={10} strokeWidth={2.4} /></SpinCell>
      <SpinCell><ChevronsDown size={10} strokeWidth={2} /></SpinCell>
    </Spin>
  );
}

function TreeLine({ row }) {
  if (row.kind === 'map') {
    return (
      <TreeRow $h={row.h} $indent={4}>
        <RowInner $gap={5}><Arrow /><MapGlyph />{row.label}</RowInner>
      </TreeRow>
    );
  }
  if (row.kind === 'layer') {
    return (
      <TreeRow $h={row.h} $indent={levelPad[row.level]}>
        {row.sel && <FocusRing />}
        <RowInner $sel={row.sel} $gap={5}>
          <Arrow />
          {row.sel
            ? <SelectedName><Box><Tick /></Box>{row.label}</SelectedName>
            : <><Box>{!row.off && <Tick />}</Box>{row.label}</>}
        </RowInner>
      </TreeRow>
    );
  }
  return (
    <TreeRow $h={row.h} $indent={row.pad}>
      <RowInner $gap={0}>
        {row.icon}
        {row.label && <Legend $ml={row.kind === 'text' ? 0 : row.ml + 5}>{row.label}</Legend>}
      </RowInner>
    </TreeRow>
  );
}

export default function App() {
  return (
    <Shell>
      <GlobalStyle />
      <MenuBar>
        {['Project', 'Map', 'Insert', 'Analysis', 'View', 'Edit', 'Imagery', 'Share'].map(m => <MenuItem key={m}>{m}</MenuItem>)}
        <MenuItem $active>GeoSWMM</MenuItem>
        <MenuItem>Help</MenuItem>
        <ContextTabs><span>Feature Layer</span><span>Labeling</span><span>Data</span></ContextTabs>
      </MenuBar>

      <Ribbon>
        <Group $w={131}>
          <GroupBody $pad={8}>
            <LargeButton>
              <ProjectIcon />
              <LabelLine>Project</LabelLine>
              <LabelLine><Chev /></LabelLine>
            </LargeButton>
            <SmallStack>
              <SmallButton><NewIcon />New</SmallButton>
              <SmallButton><OpenIcon />Open</SmallButton>
              <SmallButton $off><SaveIcon />Save</SmallButton>
            </SmallStack>
          </GroupBody>
          <GroupLabel>Project</GroupLabel>
        </Group>
        <Group $w={73}>
          <GroupBody $center>
            <LargeButton>
              <ImportIcon />
              <LabelLine>Import</LabelLine>
              <LabelLine>Data <Chev /></LabelLine>
            </LargeButton>
          </GroupBody>
          <GroupLabel>Import Data</GroupLabel>
        </Group>
        <Group $w={290.5}>
          <GroupBody $pad={9}>
            <Gallery $w={272}>
              <GalleryItems>
                <GalleryItem $sel><WatershedIcon />Watershed<br />Delineation</GalleryItem>
                <GalleryItem><WidthIcon />Width<br />Calculation</GalleryItem>
                <GalleryItem><SlopeIcon />Slope<br />Calculation</GalleryItem>
              </GalleryItems>
              <SpinColumn />
            </Gallery>
          </GroupBody>
          <GroupLabel>Preprocessing Tools</GroupLabel>
        </Group>
        <Group $w={290}>
          <GroupBody $pad={8.5}>
            <Gallery $w={273}>
              <GalleryItems>
                <GalleryItem><RainIcon />Rain Gages</GalleryItem>
                <GalleryItem><SubcatchIcon />Subcatchments</GalleryItem>
                <GalleryItem><JunctionIcon />Junctions</GalleryItem>
              </GalleryItems>
              <SpinColumn />
            </Gallery>
          </GroupBody>
          <GroupLabel>Object Tables</GroupLabel>
        </Group>
        <Group $w={96}>
          <GroupBody $center>
            <LargeButton $w={80}>
              <ModelIcon />
              <LabelLine>2D</LabelLine>
              <LabelLine>Modeling <Chev /></LabelLine>
            </LargeButton>
          </GroupBody>
          <GroupLabel>2D Modeling</GroupLabel>
        </Group>
        <Group $w={78}>
          <GroupBody $pad={12}>
            <Rule />
            <LargeButton $w={65}>
              <RunIcon />
              <LabelLine>Run</LabelLine>
              <LabelLine>Project</LabelLine>
            </LargeButton>
          </GroupBody>
          <GroupLabel>Run</GroupLabel>
        </Group>
        <Group $w={344}>
          <GroupBody $pad={9}>
            <Gallery $w={273}>
              <GalleryItems>
                <GalleryItem><SummaryIcon />Summary</GalleryItem>
                <GalleryItem><StatusIcon />Status Report</GalleryItem>
                <GalleryItem><SeriesIcon />Time Series Plot</GalleryItem>
              </GalleryItems>
              <SpinColumn />
            </Gallery>
            <LargeButton $w={54}>
              <FloodIcon />
              <LabelLine>Flood</LabelLine>
              <LabelLine>Map <Chev /></LabelLine>
            </LargeButton>
          </GroupBody>
          <GroupLabel>Results</GroupLabel>
        </Group>
        <Group $w={86}>
          <GroupBody $center>
            <LargeButton>
              <DropIcon />
              <LabelLine>Resources</LabelLine>
              <LabelLine><Chev /></LabelLine>
            </LargeButton>
          </GroupBody>
          <GroupLabel>Help</GroupLabel>
        </Group>
        <CollapseRibbon><Chev s={14} /></CollapseRibbon>
      </Ribbon>

      <Body>
        <ContentsPanel>
          <PanelHead $h={30} $pl={6} $pb={2}>
            <PanelTitle $size={14} $color="#1273bb">Contents</PanelTitle>
            <PanelActions><Chev s={13} /><PinIcon /><X size={15} strokeWidth={1.6} /></PanelActions>
          </PanelHead>
          <SearchRow>
            <FunnelIcon />
            <SearchBox>
              Search
              <SearchTail><SearchGlyph size={13} strokeWidth={2} style={{ transform: 'scaleX(-1)' }} /><Chev s={12} w={1.5} /></SearchTail>
            </SearchBox>
          </SearchRow>
          <ViewTabs>
            <ViewTab><OrderTab /></ViewTab>
            <ViewTab><CylinderTab /></ViewTab>
            <ViewTab><MapTabIcon /></ViewTab>
            <ViewTab><PencilTab /></ViewTab>
            <ViewTab><GridPlus /></ViewTab>
            <ViewTab><TagTab /></ViewTab>
            <ViewTab><DotsTab /></ViewTab>
          </ViewTabs>
          <SectionTitle>Drawing Order</SectionTitle>
          <TreeWrap>
            <Tree>{layerRows.map((row, i) => <TreeLine key={i} row={row} />)}</Tree>
            <VScroll>
              <ScrollArrow><ChevronUp size={11} /></ScrollArrow>
              <ScrollThumb />
              <ScrollArrow $end><ChevronDown size={11} /></ScrollArrow>
            </VScroll>
          </TreeWrap>
        </ContentsPanel>

        <Center>
          <TabStrip>
            <MapTab><MapGlyph s={14} />Map<X size={13} strokeWidth={1.5} /></MapTab>
            <TabNav><ChevronLeft size={15} strokeWidth={1} /><ChevronRight size={15} strokeWidth={1} /><ChevronDown size={13} strokeWidth={2} color="#666" /></TabNav>
          </TabStrip>
          <MapFrame>
            <svg width="1265" height="847" viewBox="254 165 1265 847">
              {redLines.map((l, i) => <polyline key={i} points={toPoints(l)} fill="none" stroke="#ea0000" strokeWidth="2.4" />)}
              {cyanLines.map((l, i) => <polyline key={i} points={toPoints(l)} fill="none" stroke="#2fdfe2" strokeWidth="3.6" />)}
              <polyline points="654.1,397.3 761.7,412.7" fill="none" stroke="#39b6bc" strokeWidth="1.6" />
              <circle cx="1125.1" cy="701.3" r="7" fill="#5cf014" stroke="#2a2a33" strokeWidth="2" />
              <circle cx="1127" cy="701.3" r="2" fill="#2fdfe2" />
            </svg>
          </MapFrame>
          <StatusBar>
            <ScaleCombo>1:4,446<Chev s={13} w={2} /></ScaleCombo>
            <StatusSep $m={4} />
            <ToolIcon $on $w={20}><GridPlus s={15} c="#4a6a86" /></ToolIcon>
            <ToolIcon $w={20}><SnapGrid /></ToolIcon>
            <ToolIcon $w={20}><GuideIcon /></ToolIcon>
            <ToolIcon $w={20}><CenterIcon /></ToolIcon>
            <ToolIcon $w={20}><NorthIcon /></ToolIcon>
            <ToolIcon $w={19}><TopoIcon /></ToolIcon>
            <ToolIcon $w={18}><Chev s={12} w={2.2} /></ToolIcon>
            <StatusSep $m={4} />
            <Coords>12,757,556.83 7,714,095.77 ftUS</Coords>
            <StatusSep $m={6} />
            <SelectedCount><ZoomSelected />Selected Features: 10</SelectedCount>
            <StatusSep $m={6} />
            <ToolIcon $w={27}><ExtentIcon /></ToolIcon>
            <StatusSep />
            <ToolIcon $w={29}><PauseIcon /></ToolIcon>
            <StatusSep />
            <ToolIcon $w={23}><SyncIcon /></ToolIcon>
          </StatusBar>
        </Center>

        <ToolPanel>
          <PanelHead $h={31} $pl={5}>
            <PanelTitle $size={14} $color="#2a3540">Watershed Delineation Tool</PanelTitle>
            <PanelActions><Chev s={13} /><PinIcon /><X size={15} strokeWidth={1.6} /></PanelActions>
          </PanelHead>
          <HelpRow><HelpIcon /></HelpRow>
          <StepTitle>Import Sewer Network</StepTitle>
          <Dots>{[0, 1, 2, 3, 4, 5, 6, 7].map(i => <Dot key={i} $on={i === 2} />)}</Dots>
          <ToolBody>
            <CheckRow $mt={6}><Box><Tick /></Box>Sewer Network</CheckRow>
            <FieldLabel>Sewer Pipes</FieldLabel>
            <FieldRow $mt={7}>
              <Combo $w={277} $pl={7}>E:\Woodside_StormMainNetworkData\StormMain<ComboMark /></Combo>
              <FieldTool $ml={9}><FolderIcon /></FieldTool>
              <FieldTool $ml={8}><TreeIcon /></FieldTool>
            </FieldRow>
            <CheckRow $mt={21}><Box><Tick /></Box>Specify Minimum Pipe Diameter</CheckRow>
            <FieldRow $mt={11}>
              <Combo $w={296} $pl={5}>1</Combo>
              <FieldTool $ml={14}><ApplyIcon /></FieldTool>
            </FieldRow>
            <Table>
              <HeadRow><HeadCell /><HeadCell>OBJECTID</HeadCell><HeadCell>Name</HeadCell><HeadCell /></HeadRow>
              <TableBody>
                <RowsCol>
                  {pipes.map((p, i) => (
                    <DataRow key={p[0]}>
                      <Gutter>{i === pipes.length - 1 && <RowMark />}</Gutter>
                      <Cell>{p[0]}</Cell>
                      <Cell>{p[1]}</Cell>
                    </DataRow>
                  ))}
                </RowsCol>
                <TableVScroll><ChevronUp size={12} /><ChevronDown size={12} /></TableVScroll>
              </TableBody>
              <TableHScroll>
                <Gutter />
                <HTrack><ChevronLeft size={11} /><HThumb /><ChevronRight size={11} /></HTrack>
                <Gutter />
              </TableHScroll>
            </Table>
            <CountRow>
              10 of 10 pipes selected
              <CountTools><TrashIcon /><ClearIcon /><RefreshIcon /></CountTools>
            </CountRow>
          </ToolBody>
          <ToolFoot><FootButton>Back</FootButton><FootButton>Next</FootButton></ToolFoot>
        </ToolPanel>

        <Strip>
          <StripTab><ModifyIcon /><VerticalText>Modify Features</VerticalText></StripTab>
          <StripBar />
        </Strip>
      </Body>
    </Shell>
  );
}
